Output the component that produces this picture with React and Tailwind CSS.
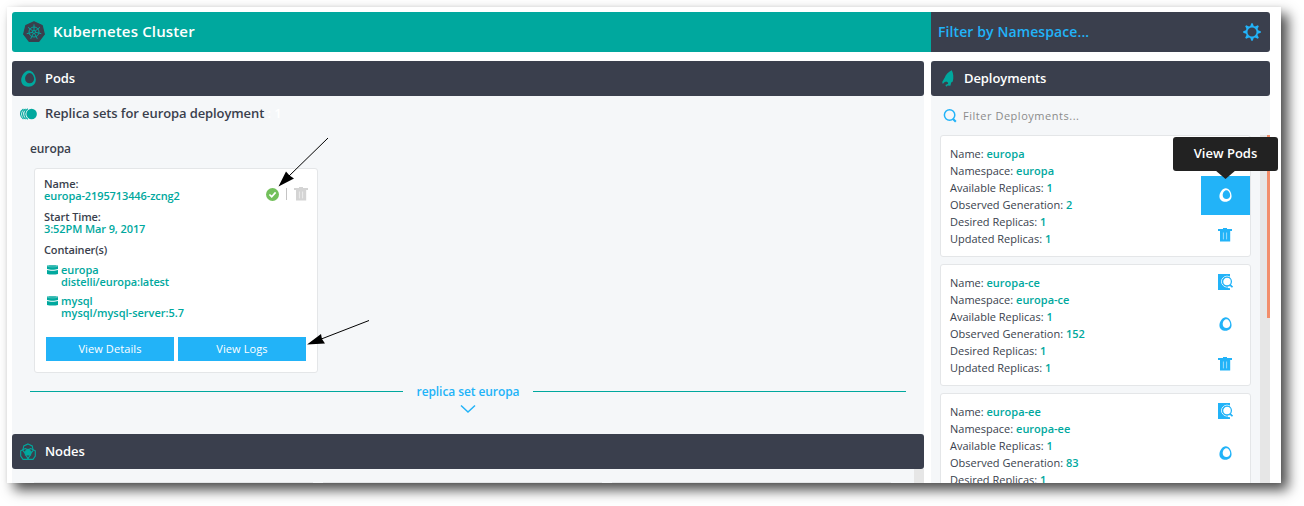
import React from "react";

function KubeIcon() {
  return (
    <svg className="h-[22px] w-[22px]" viewBox="0 0 22 22" fill="none">
      <path d="M11 .8 L19.2 4.6 L21.3 13.2 L15.8 20.4 H6.2 L.7 13.2 L2.8 4.6 Z" fill="#3a3f4d" stroke="#3a3f4d" strokeWidth="1.2" strokeLinejoin="round" />
      <g stroke="#00a89e" strokeWidth="0.95">
        <circle cx="11" cy="11" r="5" />
        <path d="M11 3.4V9.6M16.9 6.3L12.1 10.1M18.3 12.7L12.4 11.3M14.3 17.8L11.6 12.3M7.7 17.8L10.4 12.3M3.7 12.7L9.6 11.3M5.1 6.3L9.9 10.1" />
        <circle cx="11" cy="11" r="1.5" />
      </g>
    </svg>
  );
}

function Egg({ className }) {
  return (
    <svg className={className} viewBox="0 0 16 18">
      <path fillRule="evenodd" fill="currentColor" d="M8.4.4C12.6.4 15.8 6 15.8 10.3C15.8 14.8 12.6 17.7 8 17.7C3.4 17.7.2 14.8.2 10.8C.2 6.2 4 .4 8.4.4ZM9.2 3C6.4 3 4.4 6.4 4.4 9.2C4.4 12.2 6.5 14.1 9.2 14.1C12 14.1 14 12 14 9.3C14 6.5 12 3 9.2 3Z" />
    </svg>
  );
}

function ReplicaIcon() {
  return (
    <svg className="h-3 w-[18px]" viewBox="0 0 18 12" fill="none" stroke="#00a89e">
      <circle cx="11.6" cy="6" r="5.3" fill="#00a89e" stroke="none" />
      <path d="M3.4 1C-.4 3.4-.4 8.6 3.4 11M5.6.9C1.6 3.4 1.6 8.6 5.6 11.1M7.8.8C3.8 3.4 3.8 8.6 7.8 11.2" strokeWidth="1.15" />
    </svg>
  );
}

function NodesIcon() {
  return (
    <svg className="h-[18px] w-4" viewBox="0 0 16 18" fill="none" stroke="#00a89e" strokeWidth="1.1">
      <path d="M8 .9L12.2 2.9L13.2 7.4L10.4 11H5.6L2.8 7.4L3.8 2.9Z" />
      <path d="M5.2 5.6L9.2 7.5L10.2 12.2L7.4 16.4H3L.7 13V7.8Z" />
      <path d="M10.8 5.6L6.8 7.5L5.8 12.2L8.6 16.4H13L15.3 13V7.8Z" />
      <path d="M8 6.2L11 8.4L10.6 12H5.4L5 8.4Z" fill="#00a89e" />
    </svg>
  );
}

function Rocket() {
  return (
    <svg className="h-[17px] w-3" viewBox="0 0 12 17" fill="#00a89e">
      <path d="M9.8.2C6.2 2 3.6 4.6 2.8 7.6L.2 12L.8 14L2.4 12.3L4.2 11.6L6 12.4L6.1 13.8L3.4 15L4.2 16.8L5.6 15.4L8.4 15.8L9.2 12.6L10.8 11.6C11.8 7.6 11.4 3.2 9.8.2Z" />
    </svg>
  );
}

function Gear() {
  return (
    <svg className="mt-[1px] h-[18px] w-[18px]" viewBox="0 0 18 18" fill="none">
      <circle cx="9" cy="9" r="5.4" stroke="#22b3f8" strokeWidth="1.7" />
      <g fill="#22b3f8">
        <path d="M7 3.8L8.3.2H9.7L11 3.8ZM7 14.2L8.3 17.8H9.7L11 14.2ZM3.8 7L.2 8.3V9.7L3.8 11ZM14.2 7L17.8 8.3V9.7L14.2 11Z" />
        <path d="M3.8 6.5L2.2 3.2L3.2 2.2L6.5 3.8ZM11.5 3.8L14.8 2.2L15.8 3.2L14.2 6.5ZM14.2 11.5L15.8 14.8L14.8 15.8L11.5 14.2ZM6.5 14.2L3.2 15.8L2.2 14.8L3.8 11.5Z" />
      </g>
    </svg>
  );
}

function Search() {
  return (
    <svg className="h-[14px] w-[14px]" viewBox="0 0 14 14" fill="none" stroke="#22b3f8">
      <circle cx="6.6" cy="6" r="5.2" strokeWidth="1.5" />
      <path d="M9.8 9.8L12.8 12.7" strokeWidth="2.2" />
    </svg>
  );
}

function Trash() {
  return (
    <svg className="h-[14px] w-[14px]" viewBox="0 0 14 14">
      <path fill="currentColor" d="M5 0H9V1H14V3H12.2V13.6H2V3H0V1H5Z" />
      <path d="M5.4 4.5V11.4M8.6 4.5V11.4" stroke="#fff" strokeOpacity=".6" strokeWidth=".9" />
    </svg>
  );
}

function DocSearch() {
  return (
    <svg className="h-4 w-[15px]" viewBox="0 0 15 16" fill="none">
      <path d="M0 0H12V16H0Z" fill="#22b3f8" />
      <circle cx="9" cy="7.6" r="5.4" stroke="#fff" strokeWidth="1" />
      <circle cx="9" cy="7.6" r="4.4" fill="#fff" stroke="#22b3f8" strokeWidth="1.3" />
      <path d="M10 13.4L12.4 13.6" stroke="#fff" strokeWidth="1.2" />
      <path d="M12 10.8L14.5 13.2" stroke="#22b3f8" strokeWidth="1.8" />
    </svg>
  );
}

function Database() {
  return (
    <svg className="h-[10px] w-[11px]" viewBox="0 0 11 10" fill="#00a89e">
      <path d="M0 .6C2.8 0 8.2 0 11 .6V4C8.2 4.9 2.8 4.9 0 4Z" />
      <path d="M0 5C2.8 6 8.2 6 11 5V9C8.2 9.8 2.8 9.8 0 9Z" />
      <path d="M.4 1.4C4 2.1 7 2.1 10.6 1.4" fill="none" stroke="#fff" strokeWidth=".3" />
    </svg>
  );
}

function Bar({ icon, title, iconBox }) {
  return (
    <div className="flex h-[35px] shrink-0 items-center rounded-[3px] bg-[#3a3f4d] text-[13px] font-semibold tracking-[-0.08px] text-white">
      <span className={iconBox}>{icon}</span>
      <span>{title}</span>
    </div>
  );
}

function Container({ name, image }) {
  return (
    <div className="mb-[7px] flex text-[#00a89e]">
      <span className="ml-[3px] mr-[3px] pt-[1px]"><Database /></span>
      <div>
        <div>{name}</div>
        <div>{image}</div>
      </div>
    </div>
  );
}

function PodCard() {
  return (
    <div className="ml-[22px] mt-[10px] h-[205px] w-[284px] rounded-[3px] border border-[#e4e6e8] bg-white pl-[9px] pr-[9px] pt-[9px] text-[11px] font-semibold leading-[12px]">
      <div className="flex h-[33px] tracking-[-0.1px]">
        <div className="grow">
          <div>Name:</div>
          <div className="text-[#00a89e]">europa-2195713446-zcng2</div>
        </div>
        <div className="flex h-[14px] items-center pt-[16px]">
          <svg className="h-[13px] w-[13px]" viewBox="0 0 13 13" fill="none">
            <circle cx="6.5" cy="6.5" r="6.5" fill="#73c05b" />
            <path d="M3.4 6.5L5.7 8.7L9.6 4.4" stroke="#fff" strokeWidth="1.7" />
          </svg>
          <span className="mx-[7px] h-[12px] w-px bg-[#c4c4c4]" />
          <span className="text-[#d4d4d4]"><Trash /></span>
        </div>
      </div>
      <div className="h-[33px] tracking-[-0.1px]">
        <div>Start Time:</div>
        <div className="text-[#00a89e]">3:52PM Mar 9, 2017</div>
      </div>
      <div className="mb-[8px] tracking-[-0.15px]">Container(s)</div>
      <div className="tracking-[-0.1px]">
        <Container name="europa" image="distelli/europa:latest" />
      </div>
      <Container name="mysql" image="mysql/mysql-server:5.7" />
      <div className="ml-[2px] mt-[18px] flex gap-1 font-normal tracking-[0.1px] text-white">
        <button className="h-6 w-32 bg-[#22b3f8]">View Details</button>
        <button className="h-6 w-32 bg-[#22b3f8]">View Logs</button>
      </div>
    </div>
  );
}

function Field({ label, value }) {
  return (
    <div className="h-[17px] leading-[17px]">
      {label}: <span className="font-semibold text-[#00a89e]">{value}</span>
    </div>
  );
}

function Deployment({ name, generation, active }) {
  return (
    <div className="flex h-[122px] shrink-0 rounded-[3px] border border-[#e4e6e8] bg-white text-[11px]">
      <div className="grow pl-[9px] pt-[9px]">
        <Field label="Name" value={name} />
        <Field label="Namespace" value={name} />
        <Field label="Available Replicas" value="1" />
        <Field label="Observed Generation" value={generation} />
        <Field label="Desired Replicas" value="1" />
        <Field label="Updated Replicas" value="1" />
      </div>
      <div className="flex w-[49px] flex-col text-[#22b3f8]">
        <div className="flex h-10 items-start justify-center pt-[9px]">
          <DocSearch />
        </div>
        {active ? (
          <div className="relative flex h-[39px] items-start justify-center bg-[#22b3f8] pt-[12px] text-white">
            <Egg className="h-[14px] w-[13px]" />
            <div className="absolute -top-[39px] -left-[28px] z-10 flex h-[34px] w-[105px] items-center justify-center rounded-[3px] bg-[#222222] text-[13px] font-semibold">
              View Pods
              <svg className="absolute left-[42px] top-[33px] h-[10px] w-[21px]" viewBox="0 0 21 10">
                <path d="M0 0H21L10.5 9Z" fill="#222222" />
              </svg>
            </div>
          </div>
        ) : (
          <div className="flex h-[39px] items-start justify-center pt-[12px]">
            <Egg className="h-[14px] w-[13px]" />
          </div>
        )}
        <div className="flex h-[41px] items-start justify-center pr-[1px] pt-[13px]">
          <Trash />
        </div>
      </div>
    </div>
  );
}

export default function App() {
  return (
    <div className="relative h-[506px] w-[1304px] overflow-hidden bg-white pl-[7px] pt-[7px] font-['Open_Sans','Noto_Sans',sans-serif] text-[#3a3f4d]">
      <div className="h-[476px] w-[1274px] bg-white shadow-[7px_7px_12px_rgba(0,0,0,0.7),0_0_3px_rgba(0,0,0,0.06)]">
        <div className="flex h-[476px] flex-col pl-[5px] pr-[11px] pt-[5px]">
          <header className="flex h-10 shrink-0 overflow-hidden rounded-[3px] font-semibold">
            <div className="flex w-[919px] items-center gap-[8px] bg-[#00a89e] pb-[1px] pl-[11px] text-[15px] tracking-[0.15px] text-white">
              <KubeIcon />
              <span>Kubernetes Cluster</span>
            </div>
            <div className="flex w-[339px] items-center justify-between bg-[#3a3f4d] pb-[1px] pl-[7px] pr-[9px] text-[14px] tracking-[0.1px] text-[#22b3f8]">
              <span>Filter by Namespace...</span>
              <Gear />
            </div>
          </header>
          <div className="mt-[9px] flex h-[422px] gap-[7px]">
            <main className="flex w-[912px] flex-col bg-[#f5f7f9]">
              <Bar title="Pods" iconBox="w-[33px] pl-[9px] text-[#00a89e]" icon={<Egg className="h-[17px] w-[15px]" />} />
              <section className="flex h-[338px] flex-col">
                <div className="flex h-[35px] items-center text-[13px] font-semibold tracking-[-0.1px]">
                  <span className="w-[33px] pl-[8px]"><ReplicaIcon /></span>
                  <span>Replica sets for europa deployment</span>
                  <span className="whitespace-pre text-white"> : 1</span>
                </div>
                <div className="mt-[9px] pl-[18px] text-[12px] font-semibold leading-[18px] tracking-[-0.1px]">europa</div>
                <PodCard />
                <div className="mx-[18px] mt-[10px] flex h-[17px] items-center gap-[14px]">
                  <span className="h-px grow bg-[#00a89e]" />
                  <span className="text-[12px] font-semibold tracking-[-0.08px] text-[#22b3f8]">replica set europa</span>
                  <span className="h-px grow bg-[#00a89e]" />
                </div>
                <svg className="mt-[4px] h-[10px] w-[16px] self-center" viewBox="0 0 16 10" fill="none">
                  <path d="M1 1.5L8 8L15 1.5" stroke="#22b3f8" strokeWidth="1.5" />
                </svg>
              </section>
              <Bar title="Nodes" iconBox="w-[33px] pl-[8px]" icon={<NodesIcon />} />
              <section className="flex h-[14px] justify-between pl-[22px]">
                <div className="flex items-end gap-[10px]">
                  <div className="h-px w-[279px] bg-[#e4e6e8]" />
                  <div className="h-px w-[279px] bg-[#e4e6e8]" />
                  <div className="h-px w-[279px] bg-[#e4e6e8]" />
                </div>
                <div className="w-[10px] bg-[#e6e6e6]" />
              </section>
            </main>
            <aside className="flex w-[339px] flex-col bg-[#f5f7f9]">
              <Bar title="Deployments" iconBox="w-[33px] pl-[11px]" icon={<Rocket />} />
              <div className="flex h-[39px] shrink-0 items-center gap-[6px] pl-[12px] text-[11px] tracking-[0.53px] text-[#8b8b8b]">
                <Search />
                <span className="pt-[1px]">Filter Deployments...</span>
              </div>
              <div className="flex h-[348px] justify-between">
                <div className="flex h-[348px] w-[320px] flex-col gap-[7px] pl-[9px] [clip-path:inset(-10px_-40px_0_0)]">
                  <Deployment name="europa" generation="2" active />
                  <Deployment name="europa-ce" generation="152" />
                  <Deployment name="europa-ee" generation="83" />
                </div>
                <div className="flex w-[10px] justify-end bg-[#e6e6e6]">
                  <div className="h-[183px] w-[3px] bg-[#f28e6b]" />
                </div>
              </div>
            </aside>
          </div>
        </div>
      </div>
      <svg className="pointer-events-none absolute left-0 top-0 h-[506px] w-[400px]" viewBox="0 0 400 506" stroke="#000" strokeWidth="1">
        <path d="M328 138L288 177" />
        <path d="M278.5 186.5L286 171.5L289.5 175.5L294 178.5Z" stroke="none" />
        <path d="M369 320.5L320 339.5" />
        <path d="M307 344.5L321 334L322 339L325 343.5Z" stroke="none" />
      </svg>
    </div>
  );
}
